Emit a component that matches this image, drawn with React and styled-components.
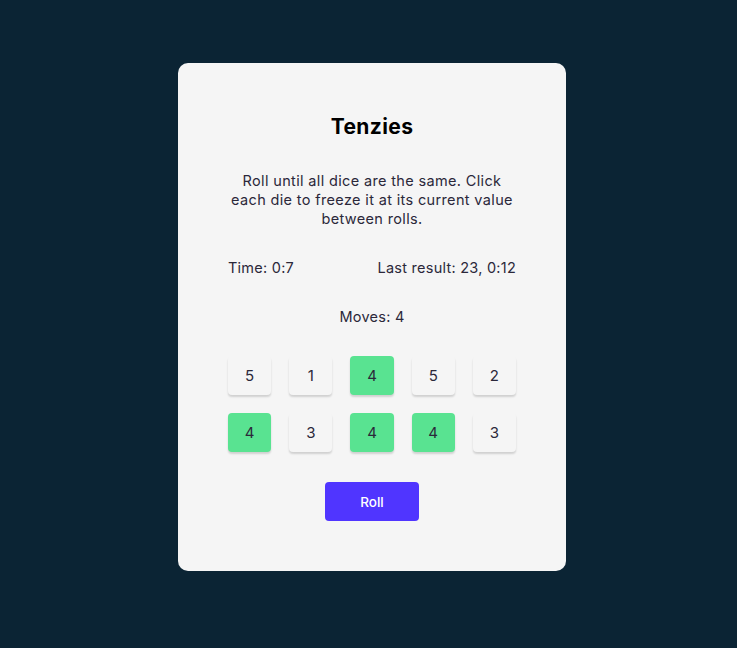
import React from "react";
import styled, { createGlobalStyle } from "styled-components";

const Global = createGlobalStyle`
  html, body { margin: 0; padding: 0; background: #0B2434; }
  body { font-family: Inter, "Noto Sans", sans-serif; }
`;

const Page = styled.main`
  min-height: 648px;
  box-sizing: border-box;
  display: flex;
  justify-content: center;
  align-items: flex-start;
  padding: 63px 0 0 7px;
`;

const Card = styled.div`
  width: 388px;
  height: 508px;
  box-sizing: border-box;
  background: #F5F5F5;
  border-radius: 10px;
  padding: 50px 50px 0;
  display: flex;
  flex-direction: column;
  align-items: center;
  color: #2B283A;
`;

const Title = styled.h1`
  margin: 0;
  font-size: 21px;
  line-height: 28px;
  font-weight: 700;
  color: #000;
  letter-spacing: 0.4px;
`;

const Instructions = styled.p`
  margin: 30px 0 0;
  font-size: 14.5px;
  line-height: 19px;
  letter-spacing: 0.35px;
  text-align: center;
  max-width: 290px;
`;

const Stats = styled.div`
  width: 100%;
  display: flex;
  justify-content: space-between;
  margin-top: 30px;
  font-size: 14.5px;
  line-height: 19px;
  letter-spacing: 0.25px;
`;

const Moves = styled.div`
  margin-top: 30px;
  font-size: 14.5px;
  line-height: 19px;
  letter-spacing: 0.25px;
`;

const DiceGrid = styled.div`
  width: 100%;
  display: grid;
  grid-template-columns: repeat(5, 1fr);
  column-gap: 18px;
  row-gap: 18px;
  margin-top: 30px;
`;

const Die = styled.button`
  height: 39px;
  border: none;
  border-radius: 4px;
  background: ${(p) => (p.$held ? "#59E391" : "#F5F5F5")};
  box-shadow: 0 2px 2px rgba(0, 0, 0, 0.15);
  font-family: Inter, "Noto Sans", sans-serif;
  font-size: 15px;
  color: #2B283A;
  padding: 0;
  cursor: pointer;
`;

const RollButton = styled.button`
  margin-top: 30px;
  width: 94px;
  height: 39px;
  border: none;
  border-radius: 4px;
  background: #5035FF;
  color: #fff;
  font-family: Inter, "Liberation Sans", sans-serif;
  font-size: 13.5px;
  font-weight: 500;
  cursor: pointer;
`;

const dice = [
  { v: 5, h: false }, { v: 1, h: false }, { v: 4, h: true }, { v: 5, h: false }, { v: 2, h: false },
  { v: 4, h: true }, { v: 3, h: false }, { v: 4, h: true }, { v: 4, h: true }, { v: 3, h: false },
];

export default function App() {
  return (
    <>
      <Global />
      <Page>
        <Card>
          <Title>Tenzies</Title>
          <Instructions>
            Roll until all dice are the same. Click each die to freeze it at its current value between rolls.
          </Instructions>
          <Stats>
            <span>Time: 0:7</span>
            <span>Last result: 23, 0:12</span>
          </Stats>
          <Moves>Moves: 4</Moves>
          <DiceGrid>
            {dice.map((d, i) => (
              <Die key={i} $held={d.h}>{d.v}</Die>
            ))}
          </DiceGrid>
          <RollButton>Roll</RollButton>
        </Card>
      </Page>
    </>
  );
}
